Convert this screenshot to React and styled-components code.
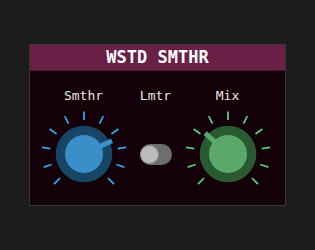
import React from "react";
import styled, { createGlobalStyle } from "styled-components";

const Global = createGlobalStyle`
  html, body { margin: 0; padding: 0; background: #1c1c1c; }
  body { width: 315px; height: 250px; overflow: hidden; }
  #root { width: 315px; height: 250px; display: flex; align-items: center; justify-content: center; }
`;

const Panel = styled.div`
  width: 255px;
  border: 1px solid #3a3337;
  background: #130009;
  display: flex;
  flex-direction: column;
  font-family: "DejaVu Sans Mono", "Liberation Mono", monospace;
`;

const Header = styled.div`
  height: 25px;
  background: #6a1f46;
  border-bottom: 1px solid #4a1630;
  color: #ffffff;
  font-weight: bold;
  font-size: 17px;
  line-height: 25px;
  text-align: center;
`;

const Body = styled.div`
  display: grid;
  grid-template-columns: repeat(3, 72px);
  justify-content: center;
  padding: 17px 4px 7px 0;
`;

const Column = styled.div`
  display: flex;
  flex-direction: column;
  align-items: center;
`;

const Label = styled.div`
  color: #e6e6e6;
  font-size: 13px;
  line-height: 16px;
  height: 16px;
`;

const Control = styled.div`
  height: 88px;
  width: 72px;
  margin-top: 6px;
  display: flex;
  align-items: center;
  justify-content: center;
`;

const KnobSvg = styled.svg`
  overflow: visible;
  display: block;
`;

const Track = styled.div`
  width: 32px;
  height: 21px;
  border-radius: 11px;
  background: #6e6e6e;
  position: relative;
  display: flex;
  align-items: center;
`;

const Thumb = styled.div`
  width: 19px;
  height: 19px;
  border-radius: 50%;
  background: #bcbcbc;
  border: 1px solid #8e8e8e;
  box-sizing: border-box;
  margin-left: 0;
`;

const TICKS = Array.from({ length: 11 }, (_, i) => -135 + i * 27);

function Knob({ angle, ring, face, tick }) {
  const rad = (a) => ((a - 90) * Math.PI) / 180;
  const pt = (a, r) => [Math.cos(rad(a)) * r, Math.sin(rad(a)) * r];
  const [x1, y1] = pt(angle, 17);
  const [x2, y2] = pt(angle, 31);
  return (
    <KnobSvg width="72" height="88" viewBox="-36 -44 72 88">
      {TICKS.map((a) => {
        const [ax, ay] = pt(a, 34);
        const [bx, by] = pt(a, 42.5);
        return <line key={a} x1={ax} y1={ay} x2={bx} y2={by} stroke={tick} strokeWidth="1.8" />;
      })}
      <circle r="28.3" fill={ring} />
      <circle r="19" fill={face} />
      <line x1={x1} y1={y1} x2={x2} y2={y2} stroke={face} strokeWidth="5" />
    </KnobSvg>
  );
}

export default function App() {
  return (
    <>
      <Global />
      <Panel>
        <Header>WSTD SMTHR</Header>
        <Body>
          <Column>
            <Label>Smthr</Label>
            <Control>
              <Knob angle={64.5} ring="#174565" face="#3b8fc9" tick="#2fa6e6" />
            </Control>
          </Column>
          <Column>
            <Label>Lmtr</Label>
            <Control>
              <Track>
                <Thumb />
              </Track>
            </Control>
          </Column>
          <Column>
            <Label>Mix</Label>
            <Control>
              <Knob angle={-47.5} ring="#295a31" face="#5aa96a" tick="#5cc97a" />
            </Control>
          </Column>
        </Body>
      </Panel>
    </>
  );
}
